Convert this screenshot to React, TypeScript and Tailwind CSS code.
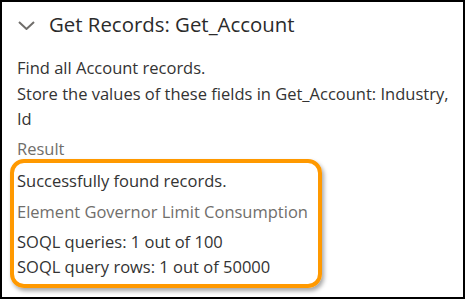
export default function App() {
  return (
    <div className="w-[465px] h-[300px] bg-white" style={{ fontFamily: '"Open Sans", "Noto Sans", sans-serif' }}>
      <div className="h-[299px] border-2 border-black overflow-hidden">
        {/* Header */}
        <div className="flex items-center pt-[7px] pl-[16px] h-[37px]">
          <svg width="17" height="9" viewBox="0 0 17 9" className="mt-[2px]">
            <path d="M1 1 L8.5 8 L16 1" fill="none" stroke="#706e6b" strokeWidth="2" />
          </svg>
          <span className="ml-[14px] text-[20.4px] leading-[28px] text-[#2b2b2b]">Get Records: Get_Account</span>
        </div>

        {/* Body */}
        <div className="px-[15px] pt-[16px] text-[16.5px] leading-[25.5px] text-[#333333]">
          <p>Find all Account records.</p>
          <p className="whitespace-nowrap">
            Store the values of these fields in Get_Account: Industry,
            <br />
            Id
          </p>
          <p className="mt-[7px] leading-[20px] text-[#706e6b]">Result</p>
        </div>

        {/* Highlighted result */}
        <div className="ml-[8px] w-[312px] h-[129px] border-4 border-[#ff9900] rounded-[14px] shadow-[2px_3px_4px_rgba(0,0,0,0.35)] pl-[3px] pt-[5px] text-[16.5px] leading-[25px] text-[#333333] whitespace-nowrap">
          <p>Successfully found records.</p>
          <p className="mt-[6px] text-[#706e6b]">Element Governor Limit Consumption</p>
          <p className="mt-[5px]">SOQL queries: 1 out of 100</p>
          <p>SOQL query rows: 1 out of 50000</p>
        </div>
      </div>
    </div>
  );
}
